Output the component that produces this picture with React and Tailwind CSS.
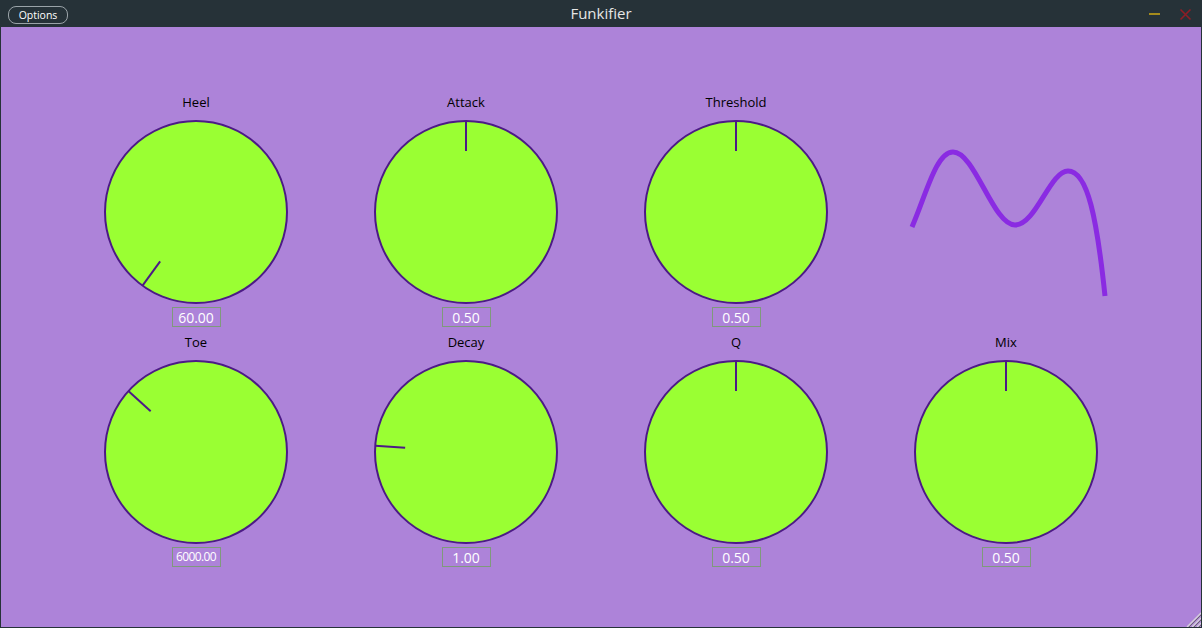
const knobs = [
  { label: 'Heel', value: '60.00', angle: 216 },
  { label: 'Attack', value: '0.50', angle: 0 },
  { label: 'Threshold', value: '0.50', angle: 0 },
  null,
  { label: 'Toe', value: '6000.00', angle: 312, narrow: true },
  { label: 'Decay', value: '1.00', angle: 274 },
  { label: 'Q', value: '0.50', angle: 0 },
  { label: 'Mix', value: '0.50', angle: 0 },
]

function Knob({ label, value, angle, narrow }) {
  const rad = (angle * Math.PI) / 180
  const x1 = 92 + 91 * Math.sin(rad)
  const y1 = 92 - 91 * Math.cos(rad)
  const x2 = 92 + 61 * Math.sin(rad)
  const y2 = 92 - 61 * Math.cos(rad)
  return (
    <div className="flex flex-col items-center">
      <div className="h-5 leading-5 text-[13px] text-black">{label}</div>
      <svg width="184" height="184" className="mt-[8px]">
        <circle cx="92" cy="92" r="91" fill="#9aff33" stroke="#4c1a86" strokeWidth="2" />
        <line x1={x1} y1={y1} x2={x2} y2={y2} stroke="#4c1a86" strokeWidth="2" />
      </svg>
      <div
        className={`mt-[3px] h-5 w-[49px] border border-[#7f9a7c] flex items-center justify-center text-white ${
          narrow ? 'text-[12px] tracking-[-0.6px]' : 'text-[14px]'
        }`}
      >
        {value}
      </div>
    </div>
  )
}

function Curve() {
  return (
    <svg width="270" height="235" viewBox="871 92 270 235">
      <path
        d="M912,227 C926,195 936,152 953,152 C975,152 993,225 1015,225 C1036,225 1050,171 1068,171 C1088,171 1097,220 1105,296"
        fill="none"
        stroke="#8a2be2"
        strokeWidth="5"
      />
    </svg>
  )
}

export default function App() {
  return (
    <div
      className="w-[1202px] h-[628px] flex flex-col bg-[#263238] overflow-hidden"
      style={{ fontFamily: '"Open Sans", "DejaVu Sans", sans-serif' }}
    >
      {/* title bar */}
      <div className="h-[27px] relative flex items-center justify-center shrink-0">
        <button className="absolute left-[8px] top-[6px] w-[60px] h-[18px] rounded-[8px] border border-[#9aa3a8] text-[10.5px] leading-none text-white">
          Options
        </button>
        <div className="text-[15px] text-[#e6e6e6]">Funkifier</div>
        <div className="absolute left-[1149px] top-[13px] w-[11px] h-[2px] bg-[#a48b1c]" />
        <svg className="absolute left-[1179px] top-[8px]" width="13" height="13">
          <path d="M1.5,1.5 L11.5,11.5 M11.5,1.5 L1.5,11.5" stroke="#8e1d25" strokeWidth="1.6" />
        </svg>
      </div>

      {/* main area */}
      <div className="relative flex-1 mx-px mb-px bg-[#ad83d9] pt-[65px] pl-[60px]">
        <div className="grid grid-cols-[270px_270px_270px_270px] gap-y-[5px]">
          {knobs.map((k, i) => (k ? <Knob key={i} {...k} /> : <Curve key={i} />))}
        </div>
        <svg className="absolute right-0 bottom-0" width="16" height="16">
          <path d="M16,2 L2,16 M16,7 L7,16 M16,12 L12,16" stroke="#d8d8d8" strokeWidth="1.2" />
          <path d="M16,4 L4,16 M16,9 L9,16 M16,14 L14,16" stroke="#6b6b6b" strokeWidth="1" />
        </svg>
      </div>
    </div>
  )
}
